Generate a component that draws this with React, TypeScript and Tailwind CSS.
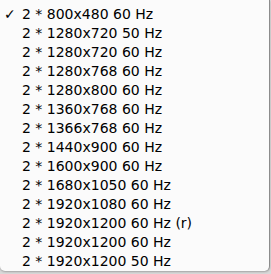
import React from 'react';

const modes = [
  '2 * 800x480 60 Hz',
  '2 * 1280x720 50 Hz',
  '2 * 1280x720 60 Hz',
  '2 * 1280x768 60 Hz',
  '2 * 1280x800 60 Hz',
  '2 * 1360x768 60 Hz',
  '2 * 1366x768 60 Hz',
  '2 * 1440x900 60 Hz',
  '2 * 1600x900 60 Hz',
  '2 * 1680x1050 60 Hz',
  '2 * 1920x1080 60 Hz',
  '2 * 1920x1200 60 Hz (r)',
  '2 * 1920x1200 60 Hz',
  '2 * 1920x1200 50 Hz',
];

const App: React.FC = () => {
  return (
    <div className="w-[271px] h-[274px] bg-[#d9d9d9] overflow-hidden">
      {/* popup menu */}
      <div className="w-[270px] h-[271px] bg-[#fbfbfb] border-r border-[#8c8c8c] rounded-b-[5px] pt-[4px] shadow-[0_1px_2px_rgba(0,0,0,0.25)] font-['DejaVu_Sans',sans-serif] text-[14px] text-black">
        {modes.map((m, i) => (
          <div key={m} className="h-[19px] flex items-center">
            <span className="w-[22px] pl-[4px] text-[14px] font-bold leading-none">{i === 0 ? '✓' : ''}</span>
            <span className="leading-none">{m}</span>
          </div>
        ))}
      </div>
    </div>
  );
};

export default App;
